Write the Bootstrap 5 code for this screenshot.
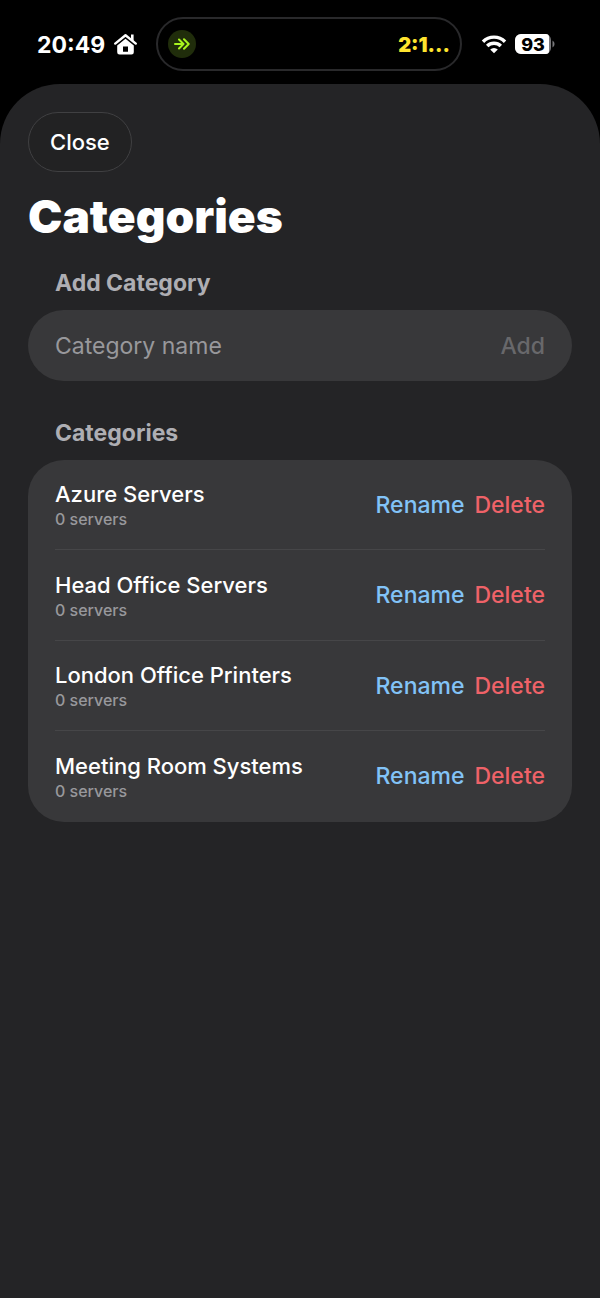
<!DOCTYPE html>
<html lang="en" data-bs-theme="dark">
<head>
<meta charset="utf-8">
<meta name="viewport" content="width=device-width, initial-scale=1">
<title>Categories</title>
<link href="https://cdn.jsdelivr.net/npm/bootstrap@5.3.0/dist/css/bootstrap.min.css" rel="stylesheet">
<style>
  body { background: #000; color: #fff; font-family: Inter, "Liberation Sans", sans-serif; font-size: 23px; line-height: 28px; font-weight: 500; }
  .status-bar { height: 84px; padding: 4px 45px 0 37px; }
  .clock { font-size: 23px; font-weight: 700; padding-top: 2px; }
  .island { height: 54px; margin: 0 19px 0 18px; padding: 0 10px; border: 2px solid #29292b; }
  .island-icon { width: 28px; height: 28px; background: #202d0b; }
  .timer { color: #ffe42e; font-size: 20px; font-weight: 900; padding-top: 2px; }
  .sheet { background: #242426; border-radius: 60px 60px 0 0; padding: 28px; }
  .btn-close-sheet { --bs-btn-color: #fff; --bs-btn-border-color: #404042; --bs-btn-hover-color: #fff; --bs-btn-hover-bg: #2c2c2e; --bs-btn-hover-border-color: #4a4a4c; background: #222223; font-size: 22px; line-height: 28px; font-weight: 500; padding: 15px 21px; }
  h1 { font-size: 46px; line-height: 56px; font-weight: 900; margin: 16px 0 25px; }
  h2 { font-size: 23px; line-height: 28px; font-weight: 700; color: #aeaeb3; padding: 0 27px; margin: 0 0 13px; }
  .panel { background: #38383a; border-radius: 36px; }
  .add-row { height: 71px; padding: 1px 27px 0; margin-bottom: 38px; }
  .name-input, .name-input:focus { background: none; border: 0; box-shadow: none; padding: 0; color: #fff; font-size: 23px; line-height: 28px; font-weight: 400; }
  .name-input::placeholder { color: #98989c; opacity: 1; }
  .text-action { --bs-btn-padding-x: 0; --bs-btn-padding-y: 0; --bs-btn-border-width: 0; --bs-btn-font-size: 23px; --bs-btn-line-height: 28px; --bs-btn-font-weight: 500; --bs-btn-disabled-color: #68686b; --bs-btn-disabled-opacity: 1; }
  .rename { --bs-btn-color: #82c3f7; --bs-btn-hover-color: #a5d5fa; }
  .remove { --bs-btn-color: #ef6268; --bs-btn-hover-color: #f58a8e; }
  .actions { gap: 10px; }
  .category-list { padding: 0 27px; margin: 0; }
  .category { height: 90px; border-bottom: 1px solid #464648; }
  .category:nth-child(even) { height: 91px; }
  .category:last-child { border-bottom-color: transparent; }
  .category-name { font-size: 22px; padding-top: 2px; }
  .count { font-size: 16px; line-height: 23px; color: #98989c; }
</style>
</head>
<body class="d-flex flex-column min-vh-100">
<header class="status-bar d-flex align-items-center">
  <span class="clock">20:49</span>
  <svg class="ms-2 flex-shrink-0" width="25" height="22" viewBox="0 0 25 22" aria-hidden="true">
    <path d="M2.200 10.600 12.500 2.200l10.300 8.400" fill="none" stroke="#fff" stroke-width="2.400" stroke-linecap="round" stroke-linejoin="round"/>
    <path d="M18 1.500h2.600v6.500L18 5.800z" fill="#fff"/>
    <path fill-rule="evenodd" d="M12.500 5.800 20.800 12.500v6.700a2.300 2.300 0 0 1-2.300 2.300h-12a2.300 2.300 0 0 1-2.300-2.300v-6.700zM10 13.500v5.200h5v-5.200z" fill="#fff"/>
  </svg>
  <div class="island flex-grow-1 rounded-pill d-flex align-items-center justify-content-between">
    <span class="island-icon rounded-circle d-flex align-items-center justify-content-center">
      <svg width="16" height="12" viewBox="0 0 16 12" fill="none" stroke="#a8f51e" stroke-width="2" stroke-linecap="round" stroke-linejoin="round" aria-hidden="true"><path d="M1 6h8M5 1.500 9.500 6 5 10.500M10 1.200 14.700 6 10 10.800"/></svg>
    </span>
    <span class="timer">2:1...</span>
  </div>
  <svg class="flex-shrink-0" width="26" height="20" viewBox="0 0 26 20" aria-label="Wi-Fi" role="img">
    <g fill="none" stroke="#fff" stroke-width="3.400"><path d="M2 7.700a15.500 15.500 0 0 1 22 0"/><path d="M6.200 12a9.600 9.600 0 0 1 13.600 0"/></g>
    <path d="M13 19.200 9.200 15.500a5.400 5.400 0 0 1 7.600 0z" fill="#fff"/>
  </svg>
  <svg class="flex-shrink-0 ms-2" width="40" height="20" viewBox="0 0 40 20" aria-label="Battery 93 percent" role="img">
    <rect width="36" height="20" rx="6" fill="#77777a"/>
    <path d="M6 0h25q3 0 3 3v14q0 3-3 3H6a6 6 0 0 1-6-6V6a6 6 0 0 1 6-6z" fill="#fff"/>
    <path d="M37.500 6.500a4 4 0 0 1 0 7z" fill="#77777a"/>
    <text x="18" y="16.500" text-anchor="middle" font-size="18" font-weight="800" fill="#000">93</text>
  </svg>
</header>
<main class="sheet flex-grow-1">
  <button type="button" class="btn btn-close-sheet rounded-pill">Close</button>
  <h1>Categories</h1>
  <section>
    <h2><label for="name">Add Category</label></h2>
    <form class="panel add-row d-flex align-items-center gap-3">
      <input id="name" type="text" class="form-control name-input" placeholder="Category name">
      <button type="submit" class="btn text-action" disabled>Add</button>
    </form>
  </section>
  <section>
    <h2>Categories</h2>
    <ul class="panel category-list list-unstyled">
      <li class="category d-flex align-items-center justify-content-between">
        <div><div class="category-name">Azure Servers</div><div class="count">0 servers</div></div>
        <div class="d-flex actions"><button type="button" class="btn text-action rename">Rename</button><button type="button" class="btn text-action remove">Delete</button></div>
      </li>
      <li class="category d-flex align-items-center justify-content-between">
        <div><div class="category-name">Head Office Servers</div><div class="count">0 servers</div></div>
        <div class="d-flex actions"><button type="button" class="btn text-action rename">Rename</button><button type="button" class="btn text-action remove">Delete</button></div>
      </li>
      <li class="category d-flex align-items-center justify-content-between">
        <div><div class="category-name">London Office Printers</div><div class="count">0 servers</div></div>
        <div class="d-flex actions"><button type="button" class="btn text-action rename">Rename</button><button type="button" class="btn text-action remove">Delete</button></div>
      </li>
      <li class="category d-flex align-items-center justify-content-between">
        <div><div class="category-name">Meeting Room Systems</div><div class="count">0 servers</div></div>
        <div class="d-flex actions"><button type="button" class="btn text-action rename">Rename</button><button type="button" class="btn text-action remove">Delete</button></div>
      </li>
    </ul>
  </section>
</main>
<script src="https://cdn.jsdelivr.net/npm/bootstrap@5.3.0/dist/js/bootstrap.bundle.min.js"></script>
</body>
</html>
